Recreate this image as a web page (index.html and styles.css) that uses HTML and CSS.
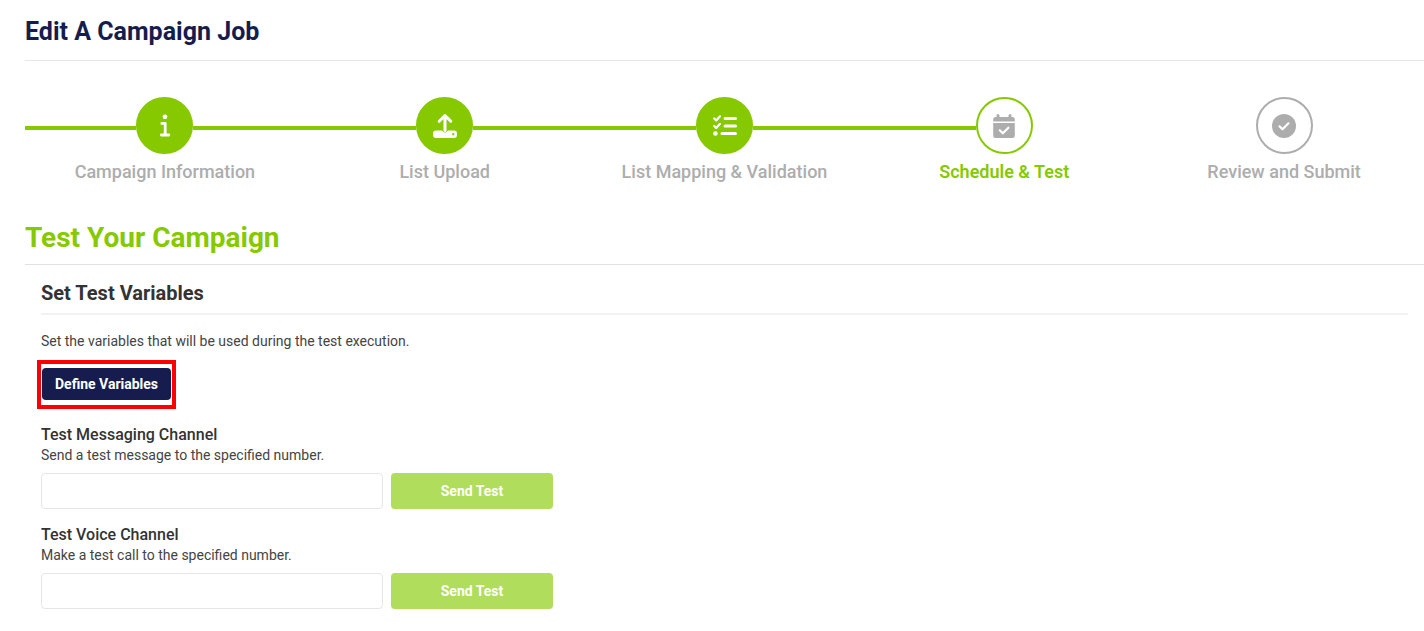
FILE: index.html
```html
<!DOCTYPE html>
<html lang="en">
<head>
<meta charset="utf-8">
<title>Edit A Campaign Job</title>
<link rel="stylesheet" href="styles.css">
</head>
<body>
<main class="page">
  <h1 class="page-title">Edit A Campaign Job</h1>
  <ol class="steps">
    <li class="step step-done">
      <div class="step-track"><span class="step-circle">
        <svg class="step-icon" viewBox="0 0 24 24" aria-hidden="true"><circle cx="12" cy="2.8" r="2.4" fill="currentColor"/><path d="M8.8 9.4h3.400v11.4M8.300 21h7.600" fill="none" stroke="currentColor" stroke-width="2.800" stroke-linecap="round" stroke-linejoin="round"/></svg>
      </span></div>
      <span class="step-label">Campaign Information</span>
    </li>
    <li class="step step-done">
      <div class="step-track"><span class="step-circle">
        <svg class="step-icon" viewBox="0 0 24 24" aria-hidden="true"><path d="M12 16.500V2M6.200 7.300 12 1.500l5.800 5.800" fill="none" stroke="currentColor" stroke-width="3" stroke-linecap="round" stroke-linejoin="round"/><path fill="currentColor" fill-rule="evenodd" d="M3 16.500h6.200a3 3 0 0 0 5.600 0H21a3 3 0 0 1 3 3v1.500a3 3 0 0 1-3 3H3a3 3 0 0 1-3-3v-1.500a3 3 0 0 1 3-3zM20.200 19.100a1.150 1.150 0 1 0 0 2.300 1.150 1.150 0 0 0 0-2.300z"/></svg>
      </span></div>
      <span class="step-label">List Upload</span>
    </li>
    <li class="step step-done">
      <div class="step-track"><span class="step-circle">
        <svg class="step-icon" viewBox="0 0 24 24" aria-hidden="true"><g fill="none" stroke="currentColor" stroke-linecap="round" stroke-linejoin="round"><path stroke-width="3" d="M12 4.500h10.500M12 12h10.500M9 19.500h13.500"/><path stroke-width="2.200" d="M1.200 4.500 3.200 6.500 7 2.300M1.200 12l2 2L7 9.800"/></g><circle cx="2.400" cy="19.500" r="2.300" fill="currentColor"/></svg>
      </span></div>
      <span class="step-label">List Mapping &amp; Validation</span>
    </li>
    <li class="step step-current" aria-current="step">
      <div class="step-track"><span class="step-circle">
        <svg class="step-icon" viewBox="0 0 24 24" aria-hidden="true"><path fill="currentColor" d="M6 0a1.500 1.500 0 0 1 1.500 1.500V3h9V1.500a1.500 1.500 0 0 1 3 0V3h1.100a2.200 2.200 0 0 1 2.200 2.200v2.300H1.200V5.200A2.200 2.200 0 0 1 3.400 3h1.100V1.500A1.500 1.500 0 0 1 6 0zM1.200 9h21.600v12.800a2.200 2.200 0 0 1-2.200 2.200H3.400a2.200 2.200 0 0 1-2.200-2.200z"/><path d="m7.800 16.300 3 3 5.600-5.600" fill="none" stroke="#fff" stroke-width="2.200" stroke-linecap="round" stroke-linejoin="round"/></svg>
      </span></div>
      <span class="step-label">Schedule &amp; Test</span>
    </li>
    <li class="step">
      <div class="step-track"><span class="step-circle">
        <svg class="step-icon" viewBox="0 0 24 24" aria-hidden="true"><circle cx="12" cy="12" r="12" fill="currentColor"/><path d="m7.500 12.300 3 3 6-6" fill="none" stroke="#fff" stroke-width="2.200" stroke-linecap="round" stroke-linejoin="round"/></svg>
      </span></div>
      <span class="step-label">Review and Submit</span>
    </li>
  </ol>

  <h2 class="section-title">Test Your Campaign</h2>
  <section class="panel">
    <h3 class="panel-title">Set Test Variables</h3>
    <p class="text">Set the variables that will be used during the test execution.</p>
    <div class="highlight"><button type="button" class="button button-dark">Define Variables</button></div>

    <form class="channel">
      <label class="channel-title" for="message-number">Test Messaging Channel</label>
      <p class="text" id="message-help">Send a test message to the specified number.</p>
      <div class="channel-row">
        <input class="field" id="message-number" type="tel" aria-describedby="message-help">
        <button type="button" class="button button-send">Send Test</button>
      </div>
    </form>
    <form class="channel">
      <label class="channel-title" for="voice-number">Test Voice Channel</label>
      <p class="text" id="voice-help">Make a test call to the specified number.</p>
      <div class="channel-row">
        <input class="field" id="voice-number" type="tel" aria-describedby="voice-help">
        <button type="button" class="button button-send">Send Test</button>
      </div>
    </form>
  </section>
</main>
</body>
</html>
```
FILE: styles.css
```css
* {
  box-sizing: border-box;
}

body {
  margin: 0;
  background: #fff;
  color: #333;
  font-family: Roboto, sans-serif;
  font-size: 14px;
  line-height: 20px;
}

h1, h2, h3, p, ol {
  margin: 0;
  padding: 0;
}

.page {
  padding: 16px 0 20px 25px;
}

.page-title {
  padding-bottom: 12px;
  border-bottom: 1px solid #e6e6e6;
  color: #161d4e;
  font-size: 25px;
  font-weight: 700;
  line-height: 32px;
}

.steps {
  display: flex;
  margin-top: 36px;
  list-style: none;
}

.step {
  flex: 1;
  color: #adadad;
  text-align: center;
}

.step-track {
  display: flex;
  align-items: center;
}

.step-track::before,
.step-track::after {
  content: "";
  flex: 1;
  height: 4px;
  margin-top: 4px;
}

.step-done .step-track::before,
.step-done .step-track::after,
.step-current .step-track::before {
  background: #86c900;
}

.step-circle {
  display: flex;
  align-items: center;
  justify-content: center;
  width: 57px;
  height: 57px;
  border: 2px solid #adadad;
  border-radius: 50%;
}

.step-done .step-circle {
  border-color: #86c900;
  background: #86c900;
  color: #fff;
}

.step-current .step-circle {
  border-color: #86c900;
}

.step-icon {
  width: 24px;
  height: 24px;
  overflow: visible;
}

.step-label {
  display: block;
  margin-top: 6px;
  font-size: 18px;
  font-weight: 500;
  line-height: 24px;
}

.step-current .step-label {
  color: #86c900;
  font-weight: 600;
}

.section-title {
  margin-top: 36px;
  padding-bottom: 8px;
  border-bottom: 1px solid #e1e1e1;
  color: #86c900;
  font-size: 28px;
  font-weight: 700;
  line-height: 36px;
}

.panel {
  padding: 16px 16px 0;
}

.panel-title {
  margin-bottom: 16px;
  padding-bottom: 8px;
  border-bottom: 2px solid #f2f2f2;
  font-size: 20px;
  font-weight: 700;
  line-height: 24px;
}

.text {
  color: #444;
}

.highlight {
  width: fit-content;
  margin: 9px 0 0 -4px;
  padding: 4px 1px 5px;
  border: 4px solid #f00;
}

.button {
  border: 0;
  border-radius: 4px;
  color: #fff;
  font-family: inherit;
  font-size: 14px;
  font-weight: 700;
  line-height: 20px;
}

.button-dark {
  display: block;
  padding: 6px 13px;
  background: #161d4e;
}

.channel {
  margin-top: 15px;
}

.channel-title {
  display: block;
  font-size: 16px;
  font-weight: 500;
  line-height: 21px;
}

.channel-row {
  display: flex;
  gap: 8px;
  margin-top: 8px;
}

.field {
  width: 342px;
  height: 36px;
  padding: 0 12px;
  border: 1px solid #e6e6e6;
  border-radius: 4px;
  font: inherit;
}

.button-send {
  width: 162px;
  background: #b0dd5b;
}
```
